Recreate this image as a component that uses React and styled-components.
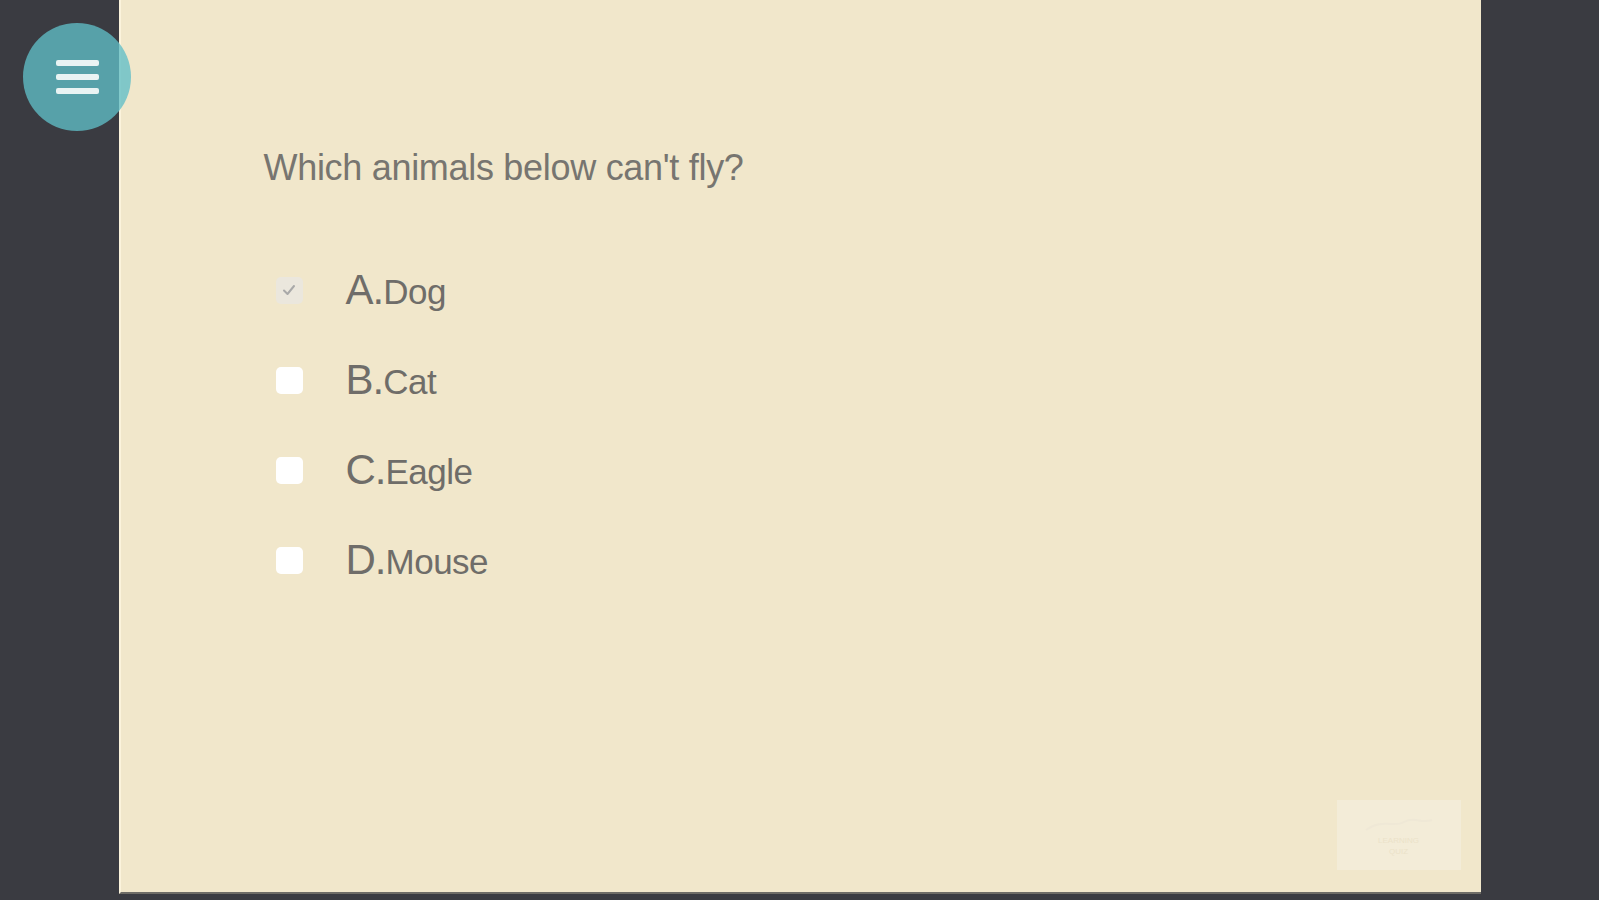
import React from "react";
import styled, { createGlobalStyle } from "styled-components";

const GlobalStyle = createGlobalStyle`
  html, body {
    margin: 0;
    padding: 0;
    background: #3a3b41;
    overflow: hidden;
  }
  body {
    font-family: "Liberation Sans", Arial, sans-serif;
  }
`;

const options = [
  { letter: "A", text: "Dog", checked: true },
  { letter: "B", text: "Cat" },
  { letter: "C", text: "Eagle" },
  { letter: "D", text: "Mouse" },
];

const App = () => {
  return (
    <>
      <GlobalStyle />
      <Page>
        <Gutter />
        <Sheet>
          <Question>Which animals below can't fly?</Question>
          <OptionList>
            {options.map((o) => (
              <Option key={o.letter}>
                <Box checked={o.checked}>
                  {o.checked && (
                    <svg width="16" height="16" viewBox="0 0 16 16">
                      <path
                        d="M3 8.5 L6.5 12 L13 4"
                        fill="none"
                        stroke="#a9a9a9"
                        strokeWidth="2"
                        strokeLinecap="round"
                        strokeLinejoin="round"
                      />
                    </svg>
                  )}
                </Box>
                <Label>
                  <Letter>{o.letter}.</Letter>
                  <Answer>{o.text}</Answer>
                </Label>
              </Option>
            ))}
          </OptionList>
          <Watermark>
            <svg width="70" height="20" viewBox="0 0 70 20">
              <path
                d="M2 16 C18 4 30 14 40 8 C50 2 58 10 68 6"
                fill="none"
                stroke="#efe8d6"
                strokeWidth="2"
              />
            </svg>
            <WmText>LEARNING</WmText>
            <WmText>QUIZ</WmText>
          </Watermark>
        </Sheet>
        <Gutter />
      </Page>
      <MenuButton>
        <Bar />
        <Bar />
        <Bar />
      </MenuButton>
    </>
  );
};

const Page = styled.div`
  display: flex;
  height: 900px;
  width: 1599px;
`;

const Gutter = styled.div`
  flex: 1;
  background: #3a3b41;
`;

const Sheet = styled.div`
  position: relative;
  width: 1362px;
  height: 894px;
  flex: none;
  background: #f1e7cb;
  border-left: 2px solid #fbf3dc;
  border-bottom: 2px solid #6e6c66;
  box-sizing: border-box;
  padding: 147px 0 0 143px;
`;

const Question = styled.div`
  font-size: 36px;
  line-height: 42px;
  color: #777570;
  letter-spacing: -0.3px;
`;

const OptionList = styled.div`
  display: flex;
  flex-direction: column;
  gap: 44px;
  margin-top: 78px;
  padding-left: 12px;
`;

const Option = styled.div`
  display: flex;
  align-items: center;
  height: 46px;
`;

const Box = styled.div`
  width: 27px;
  height: 27px;
  border-radius: 5px;
  background: ${(p) => (p.checked ? "#ebe7dd" : "#ffffff")};
  display: flex;
  align-items: center;
  justify-content: center;
  flex: none;
`;

const Label = styled.div`
  margin-left: 43px;
  display: flex;
  align-items: baseline;
  color: #6f6d69;
  white-space: nowrap;
`;

const Letter = styled.span`
  font-size: 42px;
  letter-spacing: -1px;
`;

const Answer = styled.span`
  font-size: 35px;
  letter-spacing: -0.5px;
`;

const Watermark = styled.div`
  position: absolute;
  right: 20px;
  bottom: 22px;
  width: 124px;
  height: 70px;
  background: #f3ecd8;
  display: flex;
  flex-direction: column;
  align-items: center;
  justify-content: center;
  gap: 2px;
`;

const WmText = styled.div`
  font-size: 8px;
  color: #ebe2c9;
`;

const MenuButton = styled.div`
  position: absolute;
  left: 23px;
  top: 23px;
  width: 108px;
  height: 108px;
  border-radius: 50%;
  background: rgba(96, 190, 198, 0.78);
  display: flex;
  flex-direction: column;
  align-items: center;
  justify-content: center;
  gap: 8px;
`;

const Bar = styled.div`
  width: 43px;
  height: 6px;
  border-radius: 2px;
  background: #e9f3f3;
`;

export default App;
